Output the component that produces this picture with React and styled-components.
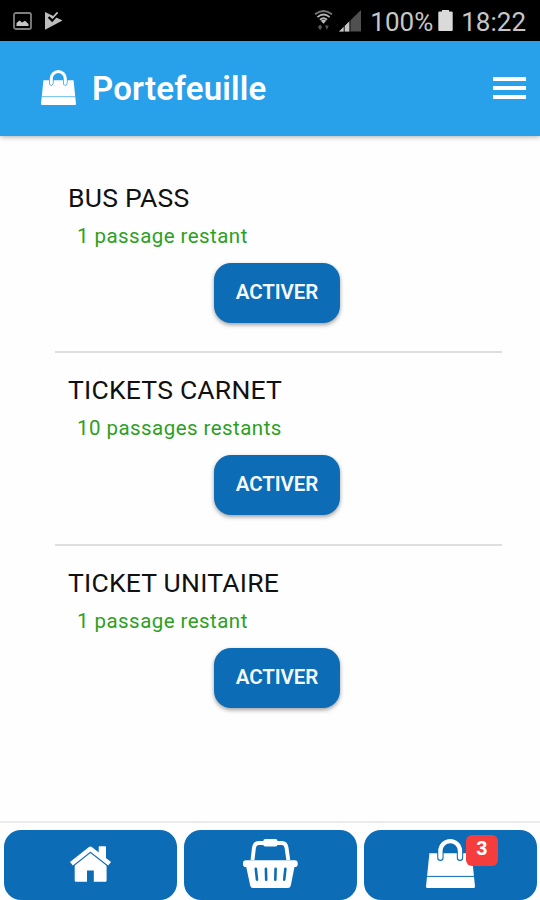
import React from "react";
import styled, { createGlobalStyle } from "styled-components";

const GlobalStyle = createGlobalStyle`
  * { box-sizing: border-box; }
  body { margin: 0; background: #fff; font-family: Roboto, "Liberation Sans", sans-serif; }
`;

const Screen = styled.div`
  display: flex;
  flex-direction: column;
  width: 540px;
  height: 900px;
  overflow: hidden;
  background: #fefefe;
`;

const StatusBar = styled.div`
  display: flex;
  align-items: center;
  flex: none;
  height: 41px;
  padding: 0 14px 0 13px;
  background: #000;
  color: #c6c6c6;
`;

const Notifications = styled.div`
  display: flex;
  gap: 12px;
  flex: 1;
`;

const StatusText = styled.span`
  font-size: 26px;
  line-height: 30px;
  margin-top: 3px;
`;

const SignalIcons = styled.div`
  display: flex;
  align-items: center;
  gap: 6px;
  margin-right: 9px;
`;

const BatteryIcon = styled.svg`
  margin: 0 8px 1px 5px;
`;

const Header = styled.header`
  display: flex;
  align-items: center;
  flex: none;
  height: 95px;
  padding: 0 14px 2px 41px;
  background: #28a0ea;
  color: #fff;
  box-shadow: 0 1px 5px rgba(0, 0, 0, 0.32);
`;

const Title = styled.h1`
  flex: 1;
  margin: 0 0 0 16px;
  padding-top: 2px;
  font-size: 33px;
  line-height: 40px;
  font-weight: 600;
  letter-spacing: 0.2px;
`;

const TicketList = styled.main`
  flex: 1;
  padding: 25px 38px 0 55px;
`;

const Ticket = styled.section`
  display: flex;
  flex-direction: column;
  height: 192.3px;
  padding: 20px 0 0 13px;
  border-bottom: 2px solid ${(p) => (p.$last ? "transparent" : "#dedede")};
`;

const TicketName = styled.h2`
  margin: 0;
  font-size: 26.5px;
  line-height: 34px;
  font-weight: 400;
  color: #111;
  letter-spacing: 0.22px;
`;

const Remaining = styled.p`
  margin: 7px 0 0 9px;
  font-size: 20.5px;
  line-height: 28px;
  color: #2ca01f;
  letter-spacing: 0.45px;
`;

const ActivateButton = styled.button`
  width: 126px;
  height: 60px;
  margin: 13px 0 0 146px;
  padding: 0 0 2px;
  border: 0;
  border-radius: 17px;
  background: #0c6cb5;
  color: #f4f9ff;
  font: 600 20.5px/24px Roboto, sans-serif;
  letter-spacing: -0.1px;
  box-shadow: 0 2px 4px rgba(0, 0, 0, 0.38);
`;

const TabBar = styled.nav`
  display: grid;
  grid-template-columns: repeat(3, 172.5px);
  gap: 7.5px;
  flex: none;
  height: 79px;
  padding: 7px 4px 0;
  border-top: 2px solid #ebebeb;
`;

const Tab = styled.button`
  display: flex;
  justify-content: center;
  height: 70px;
  padding: ${(p) => p.$inset || "9px"} 0 0;
  border: 0;
  border-radius: 17px;
  background: #0c6cb5;
  color: #fff;
`;

const IconHolder = styled.span`
  position: relative;
  display: block;
  height: 49px;
`;

const Badge = styled.span`
  position: absolute;
  top: -4px;
  left: 40px;
  width: 32px;
  height: 31px;
  border-radius: 6px;
  background: #f53d3d;
  color: #fff;
  font-size: 20px;
  line-height: 27px;
  font-weight: 700;
  text-align: center;
`;

function BagIcon({ width, height, background }) {
  return (
    <svg width={width} height={height} viewBox="0 0 49 49">
      <path d="M3.4 14.3H45.6L49 47.5Q49 49 47.5 49H1.5Q0 49 0 47.5Z" fill="currentColor" />
      <path d="M1 37.4H48" stroke={background} strokeWidth="1" />
      <path d="M14.4 18.7V12a9.8 9.8 0 0 1 19.6 0V18.7" fill="none" stroke={background} strokeWidth="6.4" strokeLinecap="round" />
      <path d="M14.4 18.7V12a9.8 9.8 0 0 1 19.6 0V18.7" fill="none" stroke="currentColor" strokeWidth="4.3" strokeLinecap="round" />
    </svg>
  );
}

function BasketIcon() {
  return (
    <svg width="55" height="49" viewBox="0 0 55 49">
      <path d="M9.5 21 11 8.5Q11.8 4 15.5 4H39Q42.7 4 43.5 8.5L45.3 21" fill="none" stroke="#fff" strokeWidth="3.9" />
      <rect x="20.3" y="0" width="14.2" height="7.6" rx="2" fill="#fff" />
      <rect x="0" y="21.3" width="54.7" height="6.8" rx="2.8" fill="#fff" />
      <path d="M3 27H51.7L47.8 46.5Q47.2 49 44.9 49H10Q7.7 49 7.2 46.5Z" fill="#fff" />
      <path d="m12.8 29.7 1.2 11M22.9 29.7l.3 11M32.6 29.7l-.3 11M42.4 29.7 41.2 40.7" stroke="#0c6cb5" strokeWidth="2.6" strokeLinecap="round" />
    </svg>
  );
}

function HomeIcon() {
  return (
    <svg width="43" height="36" viewBox="0 0 43 36">
      <path d="M5.7 18 21.4 4 37.6 18V34.5Q37.6 35.7 36.4 35.7H24.8V24.5H18V35.7H6.9Q5.7 35.7 5.7 34.5Z" fill="#fff" />
      <path d="M1.5 19.3 21.4 3.6 41.5 19.3" fill="none" stroke="#0c6cb5" strokeWidth="5.4" />
      <path d="M30.5.3h5.7q.8 0 .8.8v12.6l-7.3-6V1.1q0-.8.8-.8Z" fill="#fff" />
      <path d="M2.4 17.8 21.4 2.8 40.6 17.8" fill="none" stroke="#fff" strokeWidth="4.6" strokeLinejoin="round" />
    </svg>
  );
}

const tickets = [
  { name: "BUS PASS", remaining: "1 passage restant" },
  { name: "TICKETS CARNET", remaining: "10 passages restants" },
  { name: "TICKET UNITAIRE", remaining: "1 passage restant" },
];

export default function App() {
  return (
    <Screen>
      <GlobalStyle />
      <StatusBar>
        <Notifications>
          <svg width="19" height="18" viewBox="0 0 19 18">
            <rect x="1" y="1" width="17" height="16" rx="1.8" fill="none" stroke="#808080" strokeWidth="1.8" />
            <path d="M3.5 14V11L6.5 8.5 9 10.5 12 8.8 15.5 12V14Z" fill="#c6c6c6" />
          </svg>
          <svg width="19" height="18" viewBox="0 0 19 18">
            <path d="M1 0 18.5 8.6 1 17.8Z" fill="#bdbdbd" />
            <path d="m4.6 5 3.6 3.6L14 2" fill="none" stroke="#000" strokeWidth="2.4" />
            <path d="m7 4.2 1.6 1.6L13.6.4" fill="none" stroke="#bdbdbd" strokeWidth="1.8" />
          </svg>
        </Notifications>
        <SignalIcons>
          <svg width="19" height="21" viewBox="0 0 19 21">
            <g fill="none" stroke="#b5b5b5" strokeWidth="1.9">
              <path d="M1 4.3Q9.5-2.3 18 4.3" stroke="#777" />
              <path d="M3.4 7.1Q9.5 1.8 15.6 7.1M6 9.8Q9.5 6.5 13 9.8" />
            </g>
            <path d="m6.8 10.7 2.7 3.1 2.7-3.1Q9.5 8.8 6.8 10.7Z" fill="#bbb" />
            <path d="m3.8 17 2.4 3.2L8.2 17l-2-2.5ZM11 15.5h3.7L12.9 20Z" fill="#555" />
          </svg>
          <svg width="22" height="22" viewBox="0 0 22 22">
            <path d="M0 21.5 22 0V21.5Z" fill="#505050" />
            <path d="M0 21.5 10.5 11.2V21.5Z" fill="#c6c6c6" />
            <path d="M5.2 14.5V22M11 9V22" stroke="#111" strokeWidth="1" />
          </svg>
        </SignalIcons>
        <StatusText>100%</StatusText>
        <BatteryIcon width="15" height="21" viewBox="0 0 15 21">
          <path d="M4 0h7v1.5h2.7q1 0 1 1v17.5q0 1-1 1H1.3q-1 0-1-1V2.5q0-1 1-1H4Z" fill="#dadada" />
        </BatteryIcon>
        <StatusText>18:22</StatusText>
      </StatusBar>
      <Header>
        <BagIcon width={35} height={35} background="#28a0ea" />
        <Title>Portefeuille</Title>
        <svg width="33" height="24" viewBox="0 0 33 24">
          <path d="M0 3H33M0 12H33M0 21H33" stroke="#fff" strokeWidth="4.2" />
        </svg>
      </Header>
      <TicketList>
        {tickets.map((ticket, i) => (
          <Ticket key={ticket.name} $last={i === tickets.length - 1}>
            <TicketName>{ticket.name}</TicketName>
            <Remaining>{ticket.remaining}</Remaining>
            <ActivateButton>ACTIVER</ActivateButton>
          </Ticket>
        ))}
      </TicketList>
      <TabBar>
        <Tab $inset="16px"><HomeIcon /></Tab>
        <Tab><BasketIcon /></Tab>
        <Tab>
          <IconHolder>
            <BagIcon width={49} height={49} background="#0c6cb5" />
            <Badge>3</Badge>
          </IconHolder>
        </Tab>
      </TabBar>
    </Screen>
  );
}
